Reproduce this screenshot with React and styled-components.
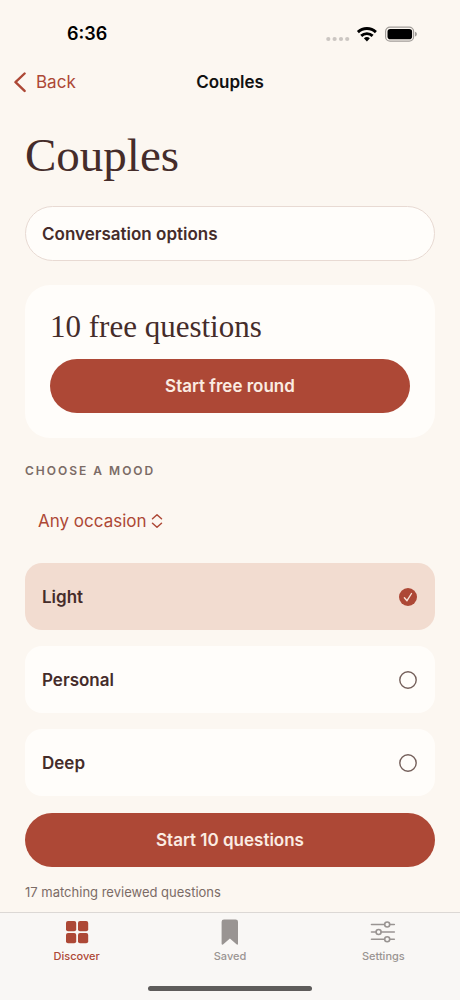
import React from 'react'
import styled, { createGlobalStyle } from 'styled-components';

const moods = ['Light', 'Personal', 'Deep'];

const occasions = ['Any occasion', 'Date night', 'Road trip'];

const tabs = [
  { name: 'Discover', Icon: GridIcon },
  { name: 'Saved', Icon: BookmarkIcon },
  { name: 'Settings', Icon: SlidersIcon },
];

function GridIcon() {
  return (
    <svg width="24" height="26" viewBox="0 0 24 26" fill="currentColor" aria-hidden="true">
      <rect x="1" y="2" width="10.2" height="10.2" rx="2" />
      <rect x="13" y="2" width="10.2" height="10.2" rx="2" />
      <rect x="1" y="14" width="10.2" height="10.2" rx="2" />
      <rect x="13" y="14" width="10.2" height="10.2" rx="2" />
    </svg>
  )
}

function BookmarkIcon() {
  return (
    <svg width="24" height="26" viewBox="0 0 24 26" fill="currentColor" aria-hidden="true">
      <path d="M6 .4h11.600a2.400 2.400 0 0 1 2.400 2.400v22c0 .9-.8 1.200-1.500.5l-6.600-5.800-6.600 5.800c-.7.7-1.700.4-1.700-.5V2.800A2.400 2.400 0 0 1 6 .4z" />
    </svg>
  )
}

function SlidersIcon() {
  return (
    <svg width="26" height="26" viewBox="0 0 26 26" fill="none" stroke="currentColor"
      strokeWidth="1.600" strokeLinecap="round" aria-hidden="true">
      <path d="M1.500 5.500h12.800M20 5.500h4.300M1.500 13h4.200M11.300 13h13M1.500 20.300h12.800M20 20.300h4.300" />
      <circle cx="17.200" cy="5.500" r="2.500" />
      <circle cx="8.600" cy="13" r="2.500" />
      <circle cx="17.200" cy="20.300" r="2.500" />
    </svg>
  )
}

function StatusIcons() {
  return (
    <svg width="92" height="18" viewBox="0 0 92 18" aria-hidden="true">
      <g fill="#cbc6c2">
        <circle cx="3.300" cy="14" r="2.100" />
        <circle cx="9.600" cy="14" r="2.100" />
        <circle cx="16" cy="14" r="2.100" />
        <circle cx="22.200" cy="14" r="2.100" />
      </g>
      <g fill="none" stroke="#000" strokeWidth="2.900">
        <path d="M32.900 7.100a13.200 13.200 0 0 1 18 0" />
        <path d="M36.200 10.900a8.300 8.300 0 0 1 11.400 0" />
      </g>
      <path d="M38.900 13.300a4.600 4.600 0 0 1 6 0l-3 3.100z" fill="#000" />
      <rect x="60.600" y="2.100" width="28" height="14" rx="4.400" fill="none" stroke="#a19d99" strokeWidth="1.200" />
      <rect x="62.500" y="4" width="24.600" height="10.200" rx="2.800" fill="#000" />
      <path d="M90 6.700c1.500.5 1.900 1.400 1.900 2.400s-.4 1.900-1.900 2.400z" fill="#a19d99" />
    </svg>
  )
}

function MarkIcon({ checked }) {
  return (
    <svg width="18" height="18" viewBox="0 0 18 18" fill="none"
      strokeWidth="1.400" strokeLinecap="round" strokeLinejoin="round" aria-hidden="true">
      {checked ? (
        <>
          <circle cx="9" cy="9" r="9" fill="#ad4836" />
          <path d="M5.400 9.700l2.600 3 4.500-7.200" stroke="#f7e3d8" />
        </>
      ) : (
        <circle cx="9" cy="9" r="8.200" stroke="#75605b" />
      )}
    </svg>
  )
}

function App() {

  const [mood, setMood] = React.useState('Light');
  const [occasion, setOccasion] = React.useState('Any occasion');
  const [activeTab, setActiveTab] = React.useState('Discover');

  return (
    <AppStyled>
      <GlobalStyle />
      <StatusBar>
        <time>6:36</time>
        <StatusIcons />
      </StatusBar>
      <NavBar>
        <BackButton type="button">
          <svg width="13" height="22" viewBox="0 0 13 22" fill="none" stroke="currentColor"
            strokeWidth="2.400" strokeLinecap="round" strokeLinejoin="round" aria-hidden="true">
            <path d="M10.600 2.500L1.500 11.200l9.100 8.700" />
          </svg>
          Back
        </BackButton>
        <strong>Couples</strong>
      </NavBar>
      <Content>
        <h1>Couples</h1>
        <OptionsButton type="button">Conversation options</OptionsButton>
        <FreeCard>
          <h2>10 free questions</h2>
          <PrimaryButton type="button">Start free round</PrimaryButton>
        </FreeCard>
        <SectionLabel id="mood-label">Choose a mood</SectionLabel>
        <OccasionPicker>
          <select aria-label="Occasion" value={occasion} onChange={(e) => setOccasion(e.target.value)}>
            {occasions.map((item) => <option key={item}>{item}</option>)}
          </select>
          <svg width="12" height="16" viewBox="0 0 12 16" fill="none" stroke="currentColor"
            strokeWidth="1.500" strokeLinecap="round" strokeLinejoin="round" aria-hidden="true">
            <path d="M1.500 5.800L6 1.800l4.500 4M1.500 10.200l4.500 4 4.500-4" />
          </svg>
        </OccasionPicker>
        <MoodList role="radiogroup" aria-labelledby="mood-label">
          {moods.map((item) => (
            <MoodRow key={item} $selected={mood === item}>
              {item}
              <RadioMark>
                <input type="radio" name="mood" value={item} checked={mood === item}
                  onChange={() => setMood(item)} />
                <MarkIcon checked={mood === item} />
              </RadioMark>
            </MoodRow>
          ))}
        </MoodList>
        <PrimaryButton type="button">Start 10 questions</PrimaryButton>
        <Caption>17 matching reviewed questions</Caption>
      </Content>
      <TabBar>
        <div className='tabs'>
          {tabs.map(({ name, Icon }) => (
            <TabButton key={name} type="button" $active={activeTab === name}
              onClick={() => setActiveTab(name)}>
              <Icon />
              {name}
            </TabButton>
          ))}
        </div>
        <HomeIndicator />
      </TabBar>
    </AppStyled>
  )
}

const GlobalStyle = createGlobalStyle`
    *{
      box-sizing: border-box;
    }
    body{
      margin: 0;
      background-color: #fcf7f1;
    }
    h1, h2, p{
      margin: 0;
      font-weight: 400;
    }
    button, select{
      font: inherit;
      border: none;
      padding: 0;
      background: none;
      color: inherit;
      cursor: pointer;
    }
`;

const AppStyled = styled.div`
    min-height: 100vh;
    display: flex;
    flex-direction: column;
    font-family: Inter, sans-serif;
    font-size: 17px;
    line-height: 24px;
    color: #452c2a;
`;

const StatusBar = styled.div`
    display: flex;
    justify-content: space-between;
    align-items: center;
    padding: 22px 43px 11px 67px;
    color: #000;
    font-size: 18px;
    font-weight: 600;
`;

const NavBar = styled.header`
    display: grid;
    grid-template-columns: 1fr auto 1fr;
    align-items: center;
    height: 50px;
    padding: 0 14px;
    strong{
      color: #111;
      font-weight: 600;
    }
`;

const BackButton = styled.button`
    justify-self: start;
    display: flex;
    align-items: center;
    gap: 9px;
    && {
      color: #ad4836;
    }
`;

const Content = styled.main`
    flex: 1;
    display: flex;
    flex-direction: column;
    padding: 20px 25px 8px;
    h1, h2{
      font-family: "Liberation Serif", serif;
    }
    h1{
      font-size: 47px;
      line-height: 56px;
      margin-bottom: 23px;
    }
    h2{
      font-size: 31px;
      line-height: 36px;
      margin-bottom: 14px;
    }
`;

const OptionsButton = styled.button`
    && {
      height: 55px;
      padding: 0 16px;
      border: 1px solid #e8dad3;
      border-radius: 28px;
      background-color: #fffdfa;
      font-weight: 600;
      text-align: left;
    }
`;

const PrimaryButton = styled.button`
    && {
      width: 100%;
      height: 54px;
      border-radius: 27px;
      background-color: #ad4836;
      color: #fbece2;
      font-weight: 600;
    }
`;

const FreeCard = styled.section`
    margin: 24px 0;
    padding: 24px 25px 25px;
    border-radius: 25px;
    background-color: #fffdfa;
`;

const SectionLabel = styled.p`
    font-size: 12px;
    line-height: 18px;
    font-weight: 600;
    letter-spacing: 2px;
    text-transform: uppercase;
    color: #7b6b66;
`;

const OccasionPicker = styled.div`
    position: relative;
    align-self: flex-start;
    margin: 24px 0 25px 13px;
    color: #ad4836;
    select{
      display: block;
      height: 34px;
      padding-right: 16px;
      appearance: none;
      field-sizing: content;
    }
    svg{
      position: absolute;
      right: 0;
      top: 9px;
      pointer-events: none;
    }
`;

const MoodList = styled.div`
    display: flex;
    flex-direction: column;
    gap: 16px;
    margin-bottom: 17px;
`;

const MoodRow = styled.label`
    display: flex;
    justify-content: space-between;
    align-items: center;
    height: 67px;
    padding: 0 18px 0 17px;
    border-radius: 17px;
    background-color: ${(props) => (props.$selected ? '#f2dcd0' : '#fffdfa')};
    font-weight: 600;
    cursor: pointer;
`;

const RadioMark = styled.span`
    display: grid;
    input, svg{
      grid-area: 1 / 1;
    }
    input{
      appearance: none;
      width: 18px;
      height: 18px;
      margin: 0;
      border-radius: 50%;
    }
    svg{
      pointer-events: none;
    }
`;

const Caption = styled.p`
    margin-top: 16px;
    font-size: 13px;
    line-height: 18px;
    color: #7b6b66;
`;

const TabBar = styled.nav`
    position: sticky;
    bottom: 0;
    display: flex;
    flex-direction: column;
    align-items: center;
    gap: 23px;
    padding: 6px 0 9px;
    border-top: 1px solid #dcd8d5;
    background-color: #f9f7f5;
    .tabs{
      width: 100%;
      display: grid;
      grid-template-columns: repeat(3, 1fr);
    }
`;

const TabButton = styled.button`
    && {
      display: flex;
      flex-direction: column;
      align-items: center;
      gap: 4px;
      color: ${(props) => (props.$active ? '#ad4836' : '#999492')};
      font-size: 11px;
      line-height: 14px;
      font-weight: 500;
    }
`;

const HomeIndicator = styled.div`
    width: 164px;
    height: 5px;
    border-radius: 3px;
    background-color: #5e5c5b;
`;

export default App
